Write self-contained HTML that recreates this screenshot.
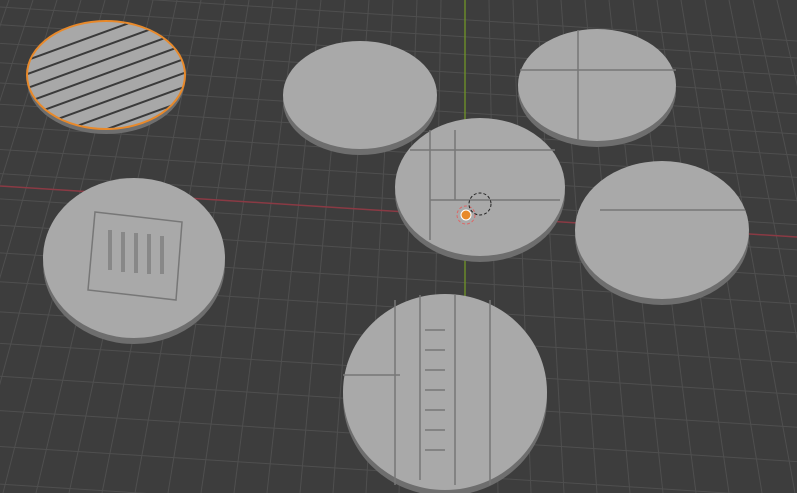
<!DOCTYPE html>
<html><head><meta charset="utf-8"><style>
html,body{margin:0;padding:0;background:#3d3d3d;overflow:hidden;width:797px;height:493px}
svg{display:block}
</style></head><body>
<svg id="s" width="797" height="493" viewBox="0 0 797 493" xmlns="http://www.w3.org/2000/svg">
<defs><clipPath id="c1"><ellipse cx="106" cy="75" rx="78" ry="53"/></clipPath></defs>
<rect width="797" height="493" fill="#3d3d3d"/>
<g id="grid" stroke="#4f4f4f" stroke-width="1"></g>
<line x1="0" y1="186" x2="797" y2="237" stroke="#8a3a44" stroke-width="1.5"/>
<line x1="465" y1="0" x2="465" y2="493" stroke="#6a8a2a" stroke-width="1.5"/>
<g fill="#a9a9a9">
 <ellipse cx="106" cy="80" rx="79" ry="54" fill="#6e6e6e"/>
 <ellipse cx="106" cy="75" rx="79" ry="54" fill="#a8a8a8" stroke="#e8892a" stroke-width="2"/>
 <g stroke="#3a3a3a" stroke-width="2" clip-path="url(#c1)">
  <line x1="0" y1="70" x2="220" y2="-10"/><line x1="0" y1="84" x2="220" y2="4"/>
  <line x1="0" y1="98" x2="220" y2="18"/><line x1="0" y1="112" x2="220" y2="32"/>
  <line x1="0" y1="126" x2="220" y2="46"/><line x1="0" y1="140" x2="220" y2="60"/>
  <line x1="0" y1="154" x2="220" y2="74"/><line x1="0" y1="168" x2="220" y2="88"/>
  <line x1="0" y1="182" x2="220" y2="102"/><line x1="0" y1="196" x2="220" y2="116"/>
 </g>
 <ellipse cx="360" cy="101" rx="77" ry="54" fill="#6e6e6e"/>
 <ellipse cx="360" cy="95" rx="77" ry="54"/>
 <ellipse cx="597" cy="91" rx="79" ry="56" fill="#6e6e6e"/>
 <ellipse cx="597" cy="85" rx="79" ry="56"/>
 <ellipse cx="662" cy="236" rx="87" ry="69" fill="#6e6e6e"/>
 <ellipse cx="662" cy="230" rx="87" ry="69"/>
 <ellipse cx="134" cy="264" rx="91" ry="80" fill="#6e6e6e"/>
 <ellipse cx="134" cy="258" rx="91" ry="80"/>
 <ellipse cx="480" cy="193" rx="85" ry="69" fill="#6e6e6e"/>
 <ellipse cx="480" cy="187" rx="85" ry="69"/>
 <ellipse cx="445" cy="398" rx="102" ry="98" fill="#6e6e6e"/>
 <ellipse cx="445" cy="392" rx="102" ry="98"/>
</g>
<g stroke="#777" stroke-width="1.5" fill="none">
 <path d="M95 212 L182 222 L176 300 L88 290 Z"/>
 <path d="M110 230 v40 M123 232 v40 M136 233 v40 M149 234 v40 M162 236 v38" stroke-width="4" stroke="#888"/>
 <path d="M578 30 V140 M520 70 H676 M600 210 H745 M410 150 H555 M430 200 H560"/>
 <path d="M395 300 V485 M420 295 V480 M455 295 V485 M490 300 V485 M343 375 H400"/>
 <path d="M425 330 H445 M425 350 H445 M425 370 H445 M425 390 H445 M425 410 H445 M425 430 H445 M425 450 H445"/>
 <path d="M430 130 V240 M455 130 V200"/>
</g>
<circle cx="466" cy="215" r="5" fill="#e8892a" stroke="#fff" stroke-width="1"/>
<circle cx="466" cy="215" r="9" fill="none" stroke="#d66" stroke-dasharray="3 2"/>
<circle cx="480" cy="204" r="11" fill="none" stroke="#222" stroke-dasharray="3 2"/>
</svg>
<script>
var g=document.getElementById('grid'),h='';
for(var i=-30;i<=30;i++){var xt=465+i*24,xb=465+i*33;h+='<line x1="'+xt+'" y1="0" x2="'+xb+'" y2="493"/>';}
var y=-10,sp=17;
while(y<560){h+='<line x1="0" y1="'+y+'" x2="797" y2="'+(y+51)+'"/>';y+=sp;sp*=1.045;}
g.innerHTML=h;
</script>
</body></html>
